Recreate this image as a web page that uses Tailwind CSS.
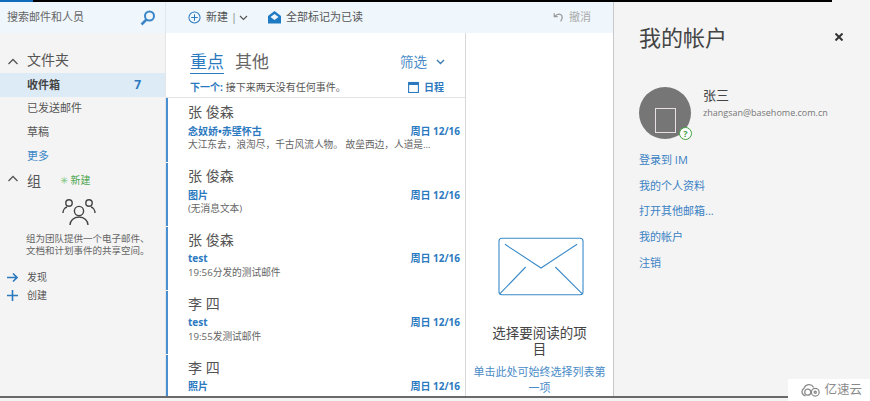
<!DOCTYPE html>
<html lang="zh">
<head>
<meta charset="utf-8">
<script src="https://cdn.jsdelivr.net/npm/@tailwindcss/browser@4"></script>
</head>
<body class="m-0 overflow-hidden bg-white">
<div class="relative w-[870px] h-[401px] overflow-hidden flex flex-col font-['Open_Sans','Noto_Sans_CJK_SC',sans-serif] text-[#444]">
  <div class="h-[2px] shrink-0 flex"><div class="w-[33px] bg-[#0f6cbd]"></div><div class="w-[799px] bg-black"></div><div class="flex-1 bg-[#f4f4f4]"></div></div>
  <div class="flex h-[394px] shrink-0">
    <!-- left nav -->
    <div class="w-[166px] shrink-0 flex flex-col bg-[#f4f4f4] border-r border-[#e3e6e8]">
      <div class="h-[31px] shrink-0 bg-[#eff6fc] flex items-center justify-between pl-[7px] pr-[9px]">
        <span class="text-[11px] leading-none text-[#666] -mt-[2px]">搜索邮件和人员</span>
        <svg width="16" height="16" viewBox="0 0 16 16" fill="none" stroke="#3a86c8" stroke-width="2"><circle cx="9.5" cy="6" r="4.5"/><path d="M6.5 9.5 1.5 14.5" stroke-width="2.5"/></svg>
      </div>
      <div class="h-[40px] shrink-0 flex items-end pb-[3px] pl-[8px] gap-[9px]">
        <svg width="10" height="18" viewBox="0 0 10 18" fill="none" stroke="#555" stroke-width="1.3"><path d="M.5 12 5 7.5 9.5 12"/></svg>
        <span class="text-[14px] leading-[20px] text-[#555]">文件夹</span>
      </div>
      <div class="h-[24px] shrink-0 bg-[#dcebf6] flex items-center justify-between pl-[27px] pr-[24px] text-[11px] font-bold text-[#444]"><span>收件箱</span><span class="text-[12px] text-[#2b79bf]">7</span></div>
      <div class="h-[24px] shrink-0 -mt-px flex items-center pl-[27px] text-[11px] text-[#555]">已发送邮件</div>
      <div class="h-[24px] shrink-0 flex items-center pl-[27px] text-[11px] text-[#555]">草稿</div>
      <div class="h-[24px] shrink-0 flex items-center pl-[27px] text-[11px] text-[#3a86c8]">更多</div>
      <div class="h-[24px] shrink-0 flex items-center pl-[8px]">
        <svg width="10" height="18" viewBox="0 0 10 18" fill="none" stroke="#555" stroke-width="1.3"><path d="M.5 10 5 5.500 9.500 10"/></svg>
        <span class="ml-[9px] text-[14px] text-[#555]">组</span>
        <span class="ml-[19px] text-[10px] text-[#4fa64f]"><span class="text-[#7cc47c]">✳</span> 新建</span>
      </div>
      <div class="flex justify-start pl-[62px] mt-[6px]">
        <svg width="34" height="29" viewBox="0 0 34 29" fill="none" stroke="#444" stroke-width="1.4">
          <circle cx="7" cy="5" r="3.2"/><circle cx="27" cy="5" r="3.2"/><circle cx="17" cy="13" r="4.6"/>
          <path d="M1 15c0-3 2-5.500 4-6M33 15c0-3-2-5.500-4-6M8 27c0-4 3.500-8 9-8s9 4 9 8"/>
        </svg>
      </div>
      <div class="pl-[26px] mt-[6px] text-[9.5px] leading-[12px] text-[#666] whitespace-nowrap">组为团队提供一个电子邮件、<br>文档和计划事件的共享空间。</div>
      <div class="mt-[11px] flex items-center h-[18px] pl-[7px] text-[10px] text-[#555]">
        <svg width="11" height="11" viewBox="0 0 11 11" fill="none" stroke="#2b79bf" stroke-width="1.6"><path d="M0 5.500h9.500M6 1.500l4 4-4 4"/></svg>
        <span class="ml-[9px]">发现</span>
      </div>
      <div class="flex items-center h-[19px] pl-[7px] text-[10px] text-[#555]">
        <svg width="11" height="11" viewBox="0 0 11 11" fill="none" stroke="#2b79bf" stroke-width="1.6"><path d="M0 5.500h11M5.500 0v11"/></svg>
        <span class="ml-[9px]">创建</span>
      </div>
    </div>
    <!-- middle -->
    <div class="w-[447px] shrink-0 flex flex-col">
      <div class="h-[31px] shrink-0 bg-[#eff6fc] flex items-center pl-[22px] pr-[22px] text-[11px] text-[#555]">
        <svg width="13" height="13" viewBox="0 0 14 14" fill="none" stroke="#2b79bf" stroke-width="1.100"><circle cx="7" cy="7" r="6"/><path d="M3.500 7h7M7 3.500v7"/></svg>
        <span class="ml-[5px]">新建</span><span class="ml-[3px] text-[#888]">|</span>
        <svg class="ml-[2px]" width="9" height="6" viewBox="0 0 9 6" fill="none" stroke="#555" stroke-width="1.200"><path d="M1 1l3.500 3.500L8 1"/></svg>
        <svg class="ml-[20px]" width="13" height="13" viewBox="0 0 13 13" fill="#1f7ac4"><path d="M6.500 0 13 5v7.500H0V5zM2.500 6l4 3 4-3-4-3z"/></svg>
        <span class="ml-[5px]">全部标记为已读</span>
        <svg class="ml-auto" width="11" height="11" viewBox="0 0 13 12" fill="none" stroke="#999" stroke-width="1.500"><path d="M1.500 1v4h4M2 5c2-2.500 4.500-3.500 7-2.500 2.500 1.200 2.500 5 0 8"/></svg>
        <span class="ml-[5px] text-[#aaa]">撤消</span>
      </div>
      <div class="flex flex-1 min-h-0">
        <div class="w-[300px] shrink-0 flex flex-col border-r border-[#d8d8d8]">
          <div class="h-[65px] shrink-0 border-b border-[#e3e3e3] pl-[24px] pr-[21px] flex flex-col">
            <div class="flex items-center mt-[16px] h-[26px]">
              <span class="text-[17px] leading-[22px] text-[#2b79bf] border-b-[1.5px] border-[#2b79bf]">重点</span>
              <span class="ml-[11px] text-[17px] text-[#666] leading-[22px]">其他</span>
              <span class="ml-auto text-[13.500px] text-[#4a8cc7]">筛选</span>
              <svg class="ml-[9px] -mr-px" width="9" height="6" viewBox="0 0 9 6" fill="none" stroke="#3a78b0" stroke-width="1.300"><path d="M1 1l3.500 3.500L8 1"/></svg>
            </div>
            <div class="flex items-center mt-[3px] h-[18px] text-[10px]">
              <span class="font-bold text-[#2b79bf]">下一个:</span><span class="ml-[3px] text-[#555]">接下来两天没有任何事件。</span>
              <svg class="ml-auto" width="11" height="12" viewBox="0 0 11 12" fill="none" stroke="#2b79bf" stroke-width="1.100"><rect x=".6" y="1.500" width="9.800" height="10"/><path d="M.6 2.800h9.800" stroke-width="2.400"/></svg>
              <span class="ml-[5px] font-bold text-[#2b79bf]">日程</span>
            </div>
          </div>
          <div class="flex-1 min-h-0 overflow-hidden">
            <div class="h-[64px] border-l-2 border-[#4a90d0] pl-[20px] pr-[5px] mb-px flex flex-col">
              <div class="text-[14px] leading-[18px] mt-[5px] text-[#555]">张 俊森</div>
              <div class="mt-[3px] flex justify-between items-center h-[14px] text-[10px] font-bold text-[#2b79bf]"><span>念奴娇•赤壁怀古</span><span>周日 12/16</span></div>
              <div class="text-[9.7px] leading-[13px] text-[#666] whitespace-nowrap">大江东去，浪淘尽，千古风流人物。 故垒西边，人道是...</div>
            </div>
            <div class="h-[63px] border-l-2 border-[#4a90d0] pl-[20px] pr-[5px] mb-px flex flex-col">
              <div class="text-[14px] leading-[18px] mt-[4px] text-[#555]">张 俊森</div>
              <div class="mt-[3px] flex justify-between items-center h-[14px] text-[10px] font-bold text-[#2b79bf]"><span>图片</span><span>周日 12/16</span></div>
              <div class="text-[9.7px] leading-[13px] text-[#666]">(无消息文本)</div>
            </div>
            <div class="h-[63px] border-l-2 border-[#4a90d0] pl-[20px] pr-[5px] mb-px flex flex-col">
              <div class="text-[14px] leading-[18px] mt-[4px] text-[#555]">张 俊森</div>
              <div class="mt-[2px] flex justify-between items-center h-[14px] text-[10px] font-bold text-[#2b79bf]"><span>test</span><span>周日 12/16</span></div>
              <div class="text-[9.7px] leading-[13px] mt-px text-[#666]">19:56分发的测试邮件</div>
            </div>
            <div class="h-[63px] border-l-2 border-[#4a90d0] pl-[20px] pr-[5px] mb-px flex flex-col">
              <div class="text-[14px] leading-[18px] mt-[4px] text-[#555]">李 四</div>
              <div class="mt-[2px] flex justify-between items-center h-[14px] text-[10px] font-bold text-[#2b79bf]"><span>test</span><span>周日 12/16</span></div>
              <div class="text-[9.7px] leading-[13px] mt-px text-[#666]">19:55发测试邮件</div>
            </div>
            <div class="h-[63px] border-l-2 border-[#4a90d0] pl-[20px] pr-[5px] flex flex-col">
              <div class="text-[14px] leading-[18px] mt-[4px] text-[#555]">李 四</div>
              <div class="mt-[2px] flex justify-between items-center h-[14px] text-[10px] font-bold text-[#2b79bf]"><span>照片</span><span>周日 12/16</span></div>
            </div>
          </div>
        </div>
        <div class="flex-1 flex flex-col items-center">
          <svg class="mt-[204px] ml-[3px]" width="87" height="60" viewBox="0 0 88 60" fill="none" stroke="#3a8ac8" stroke-width="1.100">
            <rect x="1" y="1" width="85" height="57" rx="3"/>
            <path d="M7 7 43.500 31 80 7M28 30 2 57M58 30 85 57"/>
          </svg>
          <div class="mt-[28px] w-[100px] text-center text-[13.500px] leading-[16px] text-[#444]">选择要阅读的项目</div>
          <div class="mt-[7px] w-[140px] text-center text-[11px] leading-[16px] text-[#4a8cc7]">单击此处可始终选择列表第一项</div>
        </div>
      </div>
    </div>
    <!-- right panel -->
    <div class="flex-1 bg-[#f4f4f4] border-l border-[#c8c8c8] pl-[25px] flex flex-col">
      <div class="flex items-center justify-between pr-[27px] mt-[20px] h-[30px]">
        <span class="text-[22px] leading-[30px] text-[#444]">我的帐户</span>
        <svg width="8" height="8" viewBox="0 0 8 8" stroke="#333" stroke-width="2"><path d="M.5.5l7 7M7.500.5l-7 7"/></svg>
      </div>
      <div class="flex mt-[35px]">
        <div class="relative w-[52px] h-[52px] rounded-full bg-[#767676] flex items-center justify-center">
          <div class="w-[21px] h-[25px] mt-[15px] border border-[#e6e0e6]"></div>
          <div class="absolute right-[-1px] bottom-[-1px] w-[13px] h-[13px] rounded-full bg-white border-[1.500px] border-[#3fa33f] flex items-center justify-center text-[9px] leading-none font-bold text-[#3fa33f]">?</div>
        </div>
        <div class="ml-[12px] mt-[-1px]">
          <div class="text-[13px] leading-[18px] text-[#444]">张三</div>
          <div class="text-[9px] leading-[14px] mt-[2px] text-[#777] whitespace-nowrap">zhangsan@basehome.com.cn</div>
        </div>
      </div>
      <div class="mt-[8px] flex flex-col text-[11px] text-[#3a82c4]">
        <div class="h-[26px] flex items-center">登录到 IM</div>
        <div class="h-[26px] flex items-center">我的个人资料</div>
        <div class="h-[25px] flex items-center">打开其他邮箱...</div>
        <div class="h-[26px] flex items-center">我的帐户</div>
        <div class="h-[26px] flex items-center">注销</div>
      </div>
    </div>
  </div>
  <div class="h-[2px] shrink-0 bg-[#6a6a6a]"></div>
  <div class="flex-1 bg-[#f4f4f4]"></div>
  <div class="absolute right-0 bottom-0 w-[82px] h-[22px] bg-white flex items-center justify-end pr-[8px] gap-[2px] text-[12.500px] text-[#8a8a8a]">
    <svg width="21" height="14" viewBox="0 0 19 13" fill="none" stroke="#8a8a8a" stroke-width="1.200"><path d="M4 12a3.800 3.800 0 0 1-1.500-7C4 1 9 0 11.500 4"/><circle cx="6" cy="8.500" r="2.800"/><circle cx="13" cy="8.500" r="3.600"/><circle cx="13" cy="8.500" r="1"/></svg>
    <span>亿速云</span>
  </div>
</div>
</body>
</html>
